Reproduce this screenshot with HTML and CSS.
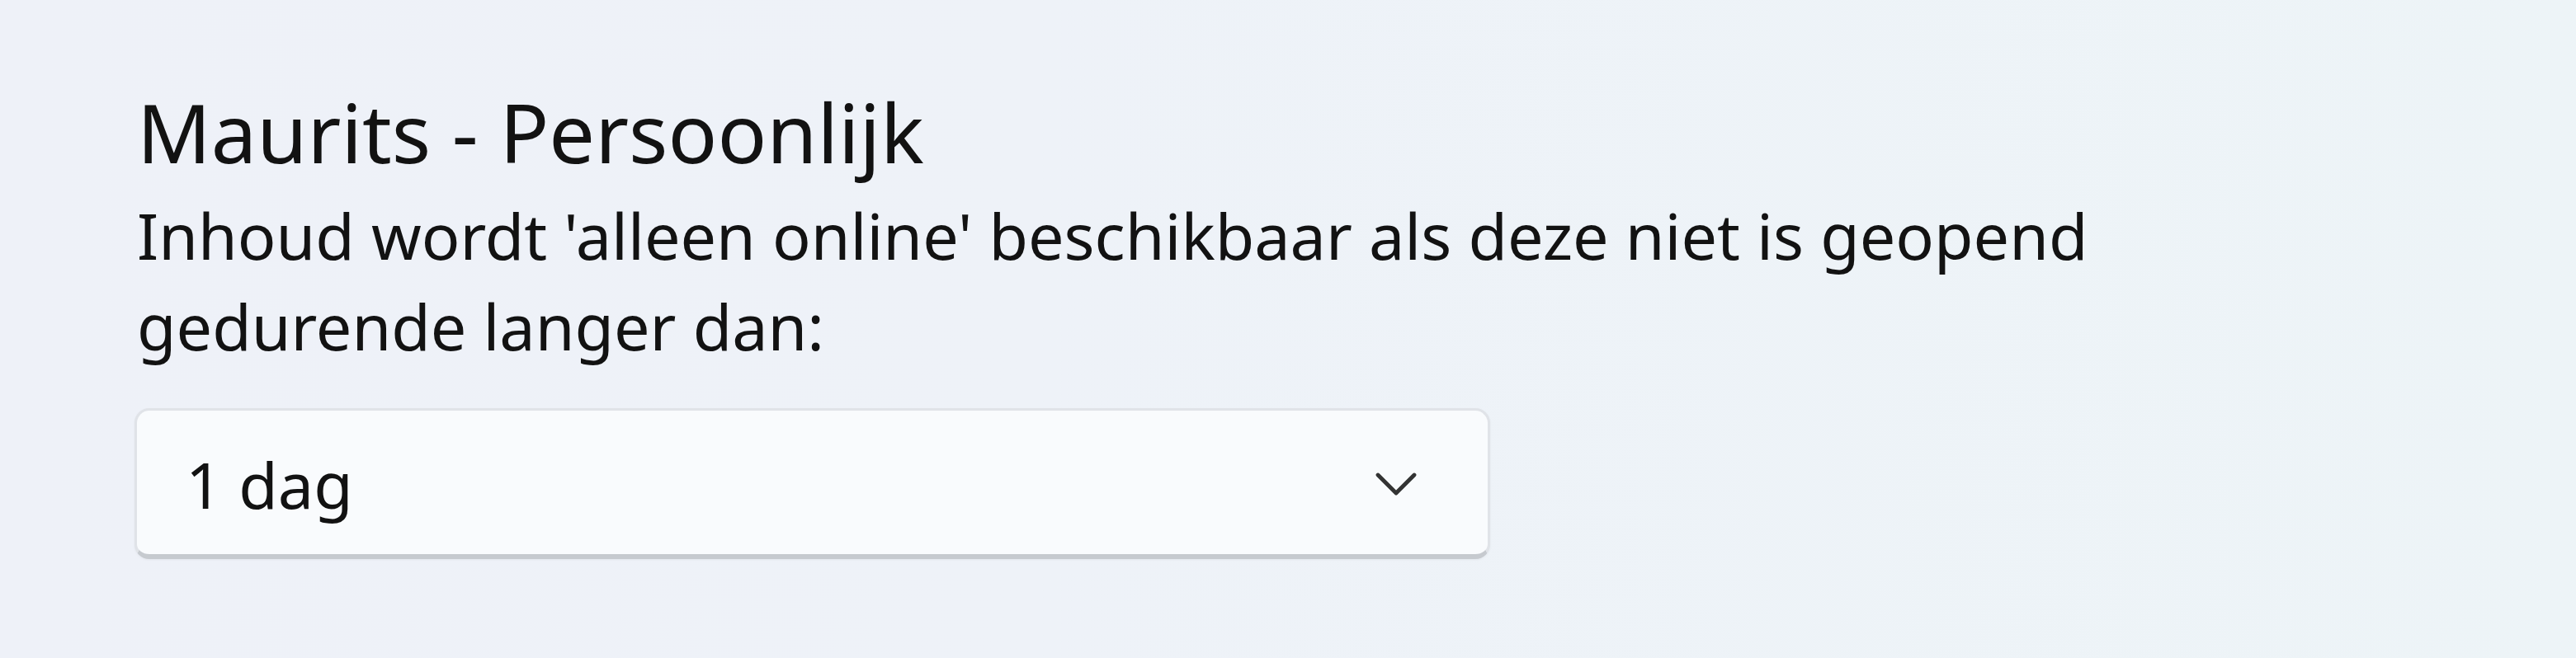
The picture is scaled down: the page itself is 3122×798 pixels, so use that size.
FILE: index.html
```html
<!DOCTYPE html>
<html lang="nl">
<head>
<meta charset="utf-8">
<title>Maurits - Persoonlijk</title>
<link rel="stylesheet" href="styles.css">
</head>
<body>
<main class="section">
  <h2 class="title">Maurits - Persoonlijk</h2>
  <p class="desc">Inhoud wordt 'alleen online' beschikbaar als deze niet is geopend gedurende langer dan:</p>
  <div class="combo" role="combobox" aria-expanded="false">
    <span class="combo-value">1 dag</span>
    <svg class="chevron" width="50" height="28" viewBox="0 0 50 28" aria-hidden="true">
      <path d="M3 3 L25 25 L47 3" fill="none" stroke="#333333" stroke-width="4.8" stroke-linecap="round" stroke-linejoin="round"/>
    </svg>
  </div>
</main>
</body>
</html>
```
FILE: styles.css
```css
html, body {
  margin: 0;
  padding: 0;
}

body {
  width: 3122px;
  height: 798px;
  overflow: hidden;
  background: linear-gradient(90deg, #eef1f8 0%, #eef2f8 40%, #edf4f7 100%);
  font-family: "Noto Sans", "Open Sans", sans-serif;
  color: #121212;
}

.section {
  padding: 100px 0 0 166px;
}

.title {
  margin: 0;
  font-size: 99px;
  font-weight: 400;
  line-height: 120px;
}

.desc {
  margin: 10px 0 0;
  font-size: 77.3px;
  line-height: 110px;
  max-width: 2480px;
}

.combo {
  box-sizing: border-box;
  margin: 45px 0 0 -3px;
  width: 1643px;
  height: 183px;
  display: flex;
  align-items: center;
  justify-content: space-between;
  padding: 4px 86px 0 59px;
  background: #f9fbfd;
  border: 3px solid #e0e3e8;
  border-bottom: 6px solid #c6cacf;
  border-radius: 18px;
  box-shadow: 0 1px 3px rgba(0, 0, 0, 0.05);
}

.combo-value {
  font-size: 77.3px;
  line-height: 110px;
}

.chevron {
  display: block;
  flex: none;
}
```
